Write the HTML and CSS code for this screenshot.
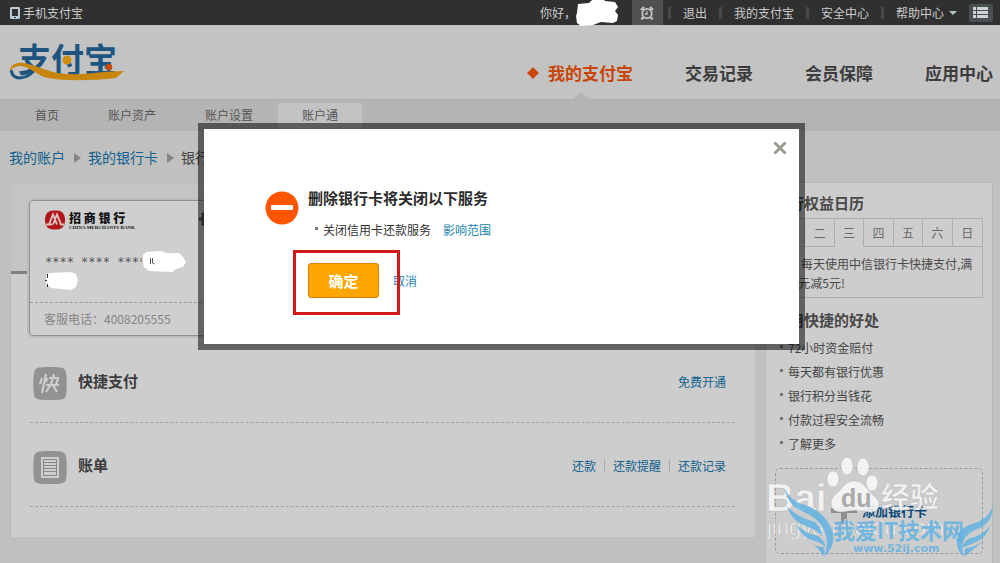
FILE: index.html
```
<!DOCTYPE html>
<html lang="zh-CN">
<head>
<meta charset="utf-8">
<title>我的支付宝</title>
<link rel="stylesheet" href="styles.css">
</head>
<body>
<div class="topbar">
  <a class="mobile" href="#">
    <svg width="10" height="12" viewBox="0 0 10 12"><path fill="#b9cbd6" fill-rule="evenodd" d="M1 0h8l1 1v10l-1 1H1l-1-1V1zM2 2v7h6V2zM4 10v1h2v-1z"/></svg>
    手机支付宝
  </a>
  <div class="usernav">
    <span class="greet">你好，</span>
    <svg class="smudge" width="44" height="28" viewBox="0 0 44 28"><path fill="#fff" d="M2 5l11-1 2-2 5-4h6l3 4 10 1 3 5-3 4 3 4-1 6-4 2-12-1-8 3-12 1-4-3-1-7 1-3z"/></svg>
    <a class="alarm" href="#" aria-label="提醒">
      <svg width="14" height="14" viewBox="0 0 14 14" fill="none" stroke="#c4c4c4"><circle cx="7" cy="7.500" r="4.700" stroke-width="1.800"/><path stroke-width="1.300" d="M7 5v3H4.800"/><path stroke-width="2.400" d="M1 4l3-3M13 4l-3-3M3 11.500l-1.500 2M11 11.500l1.500 2"/></svg>
    </a>
    <i class="bar first"></i><a href="#">退出</a>
    <i class="bar"></i><a href="#">我的支付宝</a>
    <i class="bar"></i><a href="#">安全中心</a>
    <i class="bar"></i><a class="help" href="#">帮助中心<svg width="8" height="4" viewBox="0 0 8 4"><path fill="#b4c2ca" d="M0 0h8L4 4z"/></svg></a>
    <button class="menu" type="button" aria-label="菜单">
      <svg width="16" height="12" viewBox="0 0 16 12" fill="#ccd4d8"><path d="M0 0h3v3H0zM0 4h3v3H0zM0 8h3v3H0zM4 0h11v3H4zM4 4h11v3H4zM4 8h11v3H4z"/></svg>
    </button>
  </div>
</div>

<header class="header">
  <a class="logo" href="#">
    <span class="logo-text">支付宝</span>
    <svg class="swoosh" width="116" height="40" viewBox="0 0 116 40"><path fill="none" stroke="#1d5580" stroke-width="3" d="M1.500 25C1 30 5 33 10 33c8 0 15-7 20-14"/><path fill="#c8860c" d="M0 26C0 20 6 17 13 18c12 1 28 11 44 11 20 1 36-3 57-3l-8 7c-26 3-52 3-68 0C28 31 20 22 11 21 6 21 2 23 0 26z"/><circle cx="57" cy="15" r="4.500" fill="#d08c10"/><circle cx="99" cy="22" r="3.200" fill="#c8480e"/></svg>
  </a>
  <nav class="mainnav">
    <a class="current" href="#"><svg width="12" height="12" viewBox="0 0 12 12"><path fill="#c8460a" d="M6 .500Q8 3 11.500 6 8 9 6 11.500 4 9 .500 6 4 3 6 .500z" stroke="#c8460a"/></svg>我的支付宝</a>
    <a href="#">交易记录</a>
    <a href="#">会员保障</a>
    <a href="#">应用中心</a>
  </nav>
</header>

<nav class="subnav">
  <a href="#">首页</a>
  <a href="#">账户资产</a>
  <a href="#">账户设置</a>
  <a class="tab" href="#">账户通</a>
</nav>

<div class="crumbs">
  <a href="#">我的账户</a><i class="arrow"></i><a href="#">我的银行卡</a><i class="arrow"></i><span>银行卡详情</span>
</div>

<main class="layout">
  <section class="panel">
    <div class="panel-head">
      <div class="bankcard">
        <div class="card-body">
          <div class="bank">
            <svg width="20" height="20" viewBox="0 0 20 20"><rect width="20" height="19" y=".500" rx="8" fill="#b0161a"/><path fill="none" stroke="#dcc6c4" stroke-width="1.800" d="M1 14.500h3L8 4.500l4 10M19 14.500h-3L12 4.500l-4 10M5 15l2-1"/></svg>
            <div class="bank-name"><b>招 商 银 行</b><small>CHINA MERCHANTS BANK</small></div>
            <svg class="gear" width="18" height="18" viewBox="0 0 18 18"><circle cx="9" cy="9" r="5" fill="none" stroke="#555" stroke-width="4"/><path stroke="#555" stroke-width="3" d="M9 0v4M9 14v4M0 9h4M14 9h4M3 3l2 2M13 13l2 2M15 3l-2 2M5 13l-2 2"/></svg>
          </div>
          <div class="number">**** **** ****<svg width="44" height="21" viewBox="0 0 44 21"><path fill="#fff" d="M4 1l15-1 6 2 12 0 4 4 3 5-3 5-7 2-4 3-23-1-5-4-2-7 1-5z"/><path fill="none" stroke="#555" d="M8.500 7v6M10.500 7v5l2 1"/></svg></div>
          <svg class="namemask" width="33" height="18" viewBox="0 0 33 18"><path fill="#fff" d="M4 1l22-1 5 2 2 6-2 7-5 3-20-2-5-4v-7z"/><path stroke="#333" d="M2.500 2v4M0 8.500h2M2.500 12v3"/></svg>
        </div>
        <div class="service">客服电话：4008205555</div>
      </div>
    </div>
    <div class="row">
      <svg width="34" height="34" viewBox="0 0 34 34"><path fill="#929292" d="M17 0c14 0 15 1 16 6 1 7 1 15 0 22-1 4-2 5-16 5S2 32 1 28C0 21 0 13 1 6 2 1 3 0 17 0z"/><path fill="none" stroke="#cdcdcd" stroke-width="2.200" d="M13 7L9 26M9 11l-2 6M14 11l-1 4M16 11h9l-2 7M13 18h13M21 7l-3 10-5 8M20 18l4 7"/></svg>
      <h3>快捷支付</h3>
      <div class="links"><a href="#">免费开通</a></div>
    </div>
    <div class="row">
      <svg width="34" height="34" viewBox="0 0 34 34"><path fill="#929292" d="M17 0c14 0 15 1 16 6 1 7 1 15 0 22-1 4-2 5-16 5S2 32 1 28C0 21 0 13 1 6 2 1 3 0 17 0z"/><path fill="#cdcdcd" d="M8 6h18v21H8z"/><path fill="none" stroke="#888" d="M10.500 8.500h13v16h-13zM11 11.500h12M11 14.500h12M11 17.500h12M11 20.500h12"/></svg>
      <h3>账单</h3>
      <div class="links"><a href="#">还款</a><a href="#">还款提醒</a><a href="#">还款记录</a></div>
    </div>
  </section>

  <aside class="side">
    <h3>银行权益日历</h3>
    <div class="calendar">
      <div class="days"><span>一</span><span>二</span><span class="on">三</span><span>四</span><span>五</span><span>六</span><span>日</span></div>
      <p>每天使用中信银行卡快捷支付,满10元减5元!</p>
    </div>
    <h3 class="benefit-title">使用快捷的好处</h3>
    <ul>
      <li>72小时资金赔付</li>
      <li>每天都有银行优惠</li>
      <li>银行积分当钱花</li>
      <li>付款过程安全流畅</li>
      <li>了解更多</li>
    </ul>
    <a class="add" href="#">
      <svg width="26" height="26" viewBox="0 0 26 26"><path fill="#8e8e8e" d="M10 0h6v10h10v5H16v11h-6V15H0v-5h10z"/></svg>
      添加银行卡
    </a>
    <svg class="watermark" width="240" height="113" viewBox="0 0 240 113">
      <g fill="#f8f8f8" fill-opacity=".88" stroke="#999" stroke-opacity=".5" stroke-width=".600">
        <text class="wm-latin" x="6" y="61">Bai</text>
        <ellipse cx="73" cy="29" rx="6" ry="8"/><ellipse cx="87" cy="16" rx="6" ry="9"/><ellipse cx="103" cy="17" rx="6" ry="9"/><ellipse cx="112" cy="33" rx="6" ry="8"/>
        <path d="M94 31c10 0 12 8 19 14 11 8 6 18-4 17-9-2-18-2-27 0-10 1-15-9-7-17 8-6 9-14 19-14z"/>
        <text class="wm-cjk" x="121" y="58">经验</text>
        <text class="wm-url" x="7" y="85">jingyan.baidu.com</text>
      </g>
      <text class="wm-du" x="81" y="57">du</text>
      <g fill="#62b2e2" fill-opacity=".85">
        <path d="M25 38Q29 50 42 54 64 60 72 80 77 95 64 107 70 92 64 80 58 68 44 62 27 56 25 38z"/>
        <path d="M27 56Q36 67 55 72 61 78 63 86 54 79 46 76 32 72 27 56z"/>
        <path d="M36 74Q44 83 58 86 64 90 66 97 60 92 54 91 42 88 36 74z"/>
        <path d="M47 91Q55 97 64 97 66 102 63 106 60 98 47 91z"/>
        <path d="M233 56Q228 70 212 74 198 78 197 90 196 100 204 107 200 96 205 88 210 81 222 77 233 70 233 56z"/>
        <path d="M230 76Q222 86 210 88 204 91 202 98 212 94 218 91 227 86 230 76z"/>
        <path d="M224 90Q216 97 206 98 203 101 205 106 212 101 224 90z"/>
        <text class="wm-site" x="73" y="89">我爱IT技术网</text>
        <text class="wm-www" x="93" y="102">www.52ij.com</text>
      </g>
    </svg>
  </aside>
</main>

<div class="overlay">
  <div class="dialog" role="dialog" aria-labelledby="dialog-title">
    <button class="close" type="button" aria-label="关闭"><svg width="14" height="14" viewBox="0 0 14 14"><path stroke="#9a9a90" stroke-width="3" d="M1.500 1.500l11 11M12.500 1.500l-11 11"/></svg></button>
    <svg class="stop" width="34" height="34" viewBox="0 0 34 34"><circle cx="17" cy="17" r="16.500" fill="#ff5500"/><rect x="6" y="14" width="22" height="5" rx="1" fill="#fff"/></svg>
    <div class="message">
      <h2 id="dialog-title">删除银行卡将关闭以下服务</h2>
      <div class="item">关闭信用卡还款服务<a href="#">影响范围</a></div>
      <div class="actions">
        <button class="confirm" type="button">确定</button>
        <a href="#">取消</a>
        <span class="highlight"></span>
      </div>
    </div>
  </div>
</div>
</body>
</html>
```
FILE: styles.css
```
* { box-sizing: border-box; }
body {
  margin: 0;
  min-height: 100vh;
  display: flex;
  flex-direction: column;
  position: relative;
  overflow-x: hidden;
  background: #c0c0bf;
  color: #444;
  font: 12px/20px "Noto Sans CJK SC", sans-serif;
}
a { color: #11618f; text-decoration: none; }
h2, h3, p, ul { margin: 0; padding: 0; }
h2, h3 { font-size: 15px; line-height: 20px; }
svg { display: block; flex: none; }
button { border: 0; padding: 0; font: inherit; cursor: pointer; }

.topbar {
  height: 25px;
  padding: 0 7px 0 10px;
  display: flex;
  justify-content: space-between;
  align-items: center;
  background: #303030;
  color: #ccc;
}
.topbar a { color: #ccc; }
.mobile { display: flex; align-items: center; gap: 3px; }
.usernav { display: flex; align-items: center; height: 25px; }
.smudge { overflow: visible; z-index: 1; }
.alarm {
  width: 31px;
  height: 25px;
  margin-left: 12px;
  background: #505050;
  display: flex;
  align-items: center;
  justify-content: center;
}
.bar { width: 3px; height: 12px; margin: 0 12px; background: #484848; }
.bar.first { margin-left: 5px; }
.help { display: flex; align-items: center; gap: 5px; }
.menu {
  width: 24px;
  height: 18px;
  margin-left: 12px;
  border-radius: 2px;
  background: #4a4f52;
  display: flex;
  align-items: center;
  justify-content: center;
}

.header {
  height: 74px;
  padding: 0 7px 0 10px;
  display: flex;
  justify-content: space-between;
  background: #c3c3c3;
}
.logo { position: relative; width: 116px; height: 74px; }
.logo-text {
  display: block;
  padding: 13px 0 0 8px;
  color: #1d5580;
  font-size: 33px;
  font-weight: bold;
  line-height: 40px;
}
.swoosh { position: absolute; left: 0; top: 20px; }
.mainnav {
  display: flex;
  gap: 52px;
  padding-top: 34px;
  font-size: 17px;
  font-weight: bold;
  line-height: 28px;
}
.mainnav a { color: #3c3c3c; height: 40px; }
.mainnav .current {
  display: flex;
  gap: 9px;
  color: #c8460a;
  position: relative;
}
.current svg { margin-top: 8px; }
.current::after {
  content: "";
  position: absolute;
  left: 46px;
  bottom: 0;
  border: solid transparent;
  border-width: 0 8px 7px;
  border-bottom-color: #b4b4b4;
}

.subnav {
  height: 32px;
  padding: 3px 11px 0;
  display: flex;
  gap: 1px;
  border-top: 1px solid #b0b0b0;
  background: #b4b4b4;
}
.subnav a { padding: 2px 24px 0; color: #555; }
.subnav .tab { background: #c3c3c3; border-radius: 2px 2px 0 0; }

.crumbs {
  height: 51px;
  padding: 16px 9px 0;
  display: flex;
  align-items: flex-start;
  font-size: 14px;
}
.crumbs .arrow {
  margin: 6px 7px 0 9px;
  border: solid transparent;
  border-width: 5px 0 5px 7px;
  border-left-color: #858585;
}

.layout {
  flex: 1;
  display: grid;
  grid-template-columns: 1fr 228px;
  gap: 10px;
  padding: 0 7px 0 10px;
}
.panel {
  align-self: start;
  padding-bottom: 30px;
  border: 1px solid #bcbcbc;
  border-width: 1px 0 0 1px;
  background: linear-gradient(#c4c4c4 88px, #808080 88px, #808080 91px, #cdcdcd 91px);
}
.panel-head { padding: 17px 18px 3px; }
.bankcard {
  width: 278px;
  border: 1px solid #909090;
  border-radius: 5px;
  box-shadow: 0 0 0 2px #bbb;
  background: #cfcfcf;
}
.card-body { height: 102px; padding: 9px 15px 0; border-bottom: 1px dashed #999; }
.bank { display: flex; gap: 4px; }
.bank-name { color: #111; width: 126px; }
.bank-name b { display: block; font-size: 12px; font-weight: 900; line-height: 15px; }
.bank-name small { display: block; font: bold 5px/5px "Liberation Serif", serif; }
.number {
  display: flex;
  align-items: center;
  height: 21px;
  margin-top: 21px;
  color: #555;
  font: 12px/20px "DejaVu Sans Mono", monospace;
}
.number svg { margin-left: -4px; }
.service { height: 32px; padding: 6px 14px; color: #858585; }

.row {
  height: 84px;
  margin: 0 20px 0 19px;
  padding: 28px 9px 0 3px;
  display: flex;
  align-items: flex-start;
  border-bottom: 1px dashed #a2a2a2;
}
.row h3 { margin: 4px 0 0 11px; color: #3c3c3c; }
.links { display: flex; margin: 8px 0 0 auto; line-height: 13px; }
.links a + a { margin-left: 8px; padding-left: 8px; border-left: 1px solid #aaa; }

.side {
  position: relative;
  padding: 10px 9px 8px;
  border: 1px solid #b8b8b8;
  border-bottom: 0;
  background: #cdcdcd;
}
.side h3 { margin-left: -1px; color: #484848; }
.calendar { margin-top: 5px; border: 1px solid #adadad; }
.days { display: grid; grid-template-columns: repeat(7, 1fr); color: #6a6a6a; text-align: center; }
.days span { line-height: 27px; border: solid #adadad; border-width: 0 1px 1px 0; }
.days span:last-child { border-right: 0; }
.days .on { border-bottom-color: transparent; }
.calendar p { padding: 7px 4px 5px 9px; text-indent: 16px; line-height: 19px; color: #4a4a4a; }
.side .benefit-title { margin-top: 12px; }
.side ul { margin-top: 6px; list-style: none; line-height: 24px; }
.side li { position: relative; padding-left: 13px; }
.side li::before, .item::before {
  content: "";
  position: absolute;
  left: 5px;
  top: 9px;
  width: 3px;
  height: 3px;
  background: #777;
}
.add {
  height: 86px;
  margin-top: 12px;
  display: flex;
  align-items: center;
  justify-content: center;
  gap: 5px;
  border: 1px dashed #999;
  border-radius: 5px;
  color: #0b4a78;
  font-size: 13px;
  font-weight: bold;
}
.watermark { position: absolute; right: -8px; bottom: 0; overflow: visible; }
.wm-latin { font: bold 39px "Liberation Sans", sans-serif; }
.wm-cjk { font: bold 29px "Noto Sans CJK SC", sans-serif; }
.wm-url { font: 22px "Liberation Sans", sans-serif; }
.wm-du { font: bold 25px "Liberation Sans", sans-serif; fill: #aaa; }
.wm-site { font: bold 22px "Noto Sans CJK SC", sans-serif; }
.wm-www { font: bold 11px "DejaVu Sans", sans-serif; }

.overlay {
  position: absolute;
  inset: 0;
  padding: 123px 0 0 3px;
  display: flex;
  justify-content: center;
  align-items: flex-start;
}
.dialog {
  position: relative;
  width: 607px;
  max-width: 100%;
  padding: 59px 61px 46px;
  display: flex;
  gap: 9px;
  border: 6px solid rgba(0, 0, 0, .52);
  background: #fff;
  background-clip: padding-box;
  color: #333;
}
.dialog a { color: #1a86b0; }
.close { position: absolute; right: 12px; top: 12px; background: none; }
.stop { margin-top: 3px; }
.message h2 { color: #2c2c2c; }
.item { position: relative; margin-top: 12px; padding-left: 15px; }
.item::before { left: 7px; top: 7px; }
.item a { margin-left: 12px; }
.actions { position: relative; display: flex; align-items: center; gap: 14px; margin-top: 23px; width: 107px; white-space: nowrap; }
.confirm {
  flex: none;
  width: 71px;
  height: 35px;
  border: 1px solid #d87f08;
  border-radius: 3px;
  background: #ffa600;
  color: #fff;
  font-size: 15px;
  font-weight: bold;
}
.highlight {
  position: absolute;
  left: -15px;
  top: -13px;
  width: 107px;
  height: 65px;
  border: 3px solid #d01818;
  pointer-events: none;
}
```
